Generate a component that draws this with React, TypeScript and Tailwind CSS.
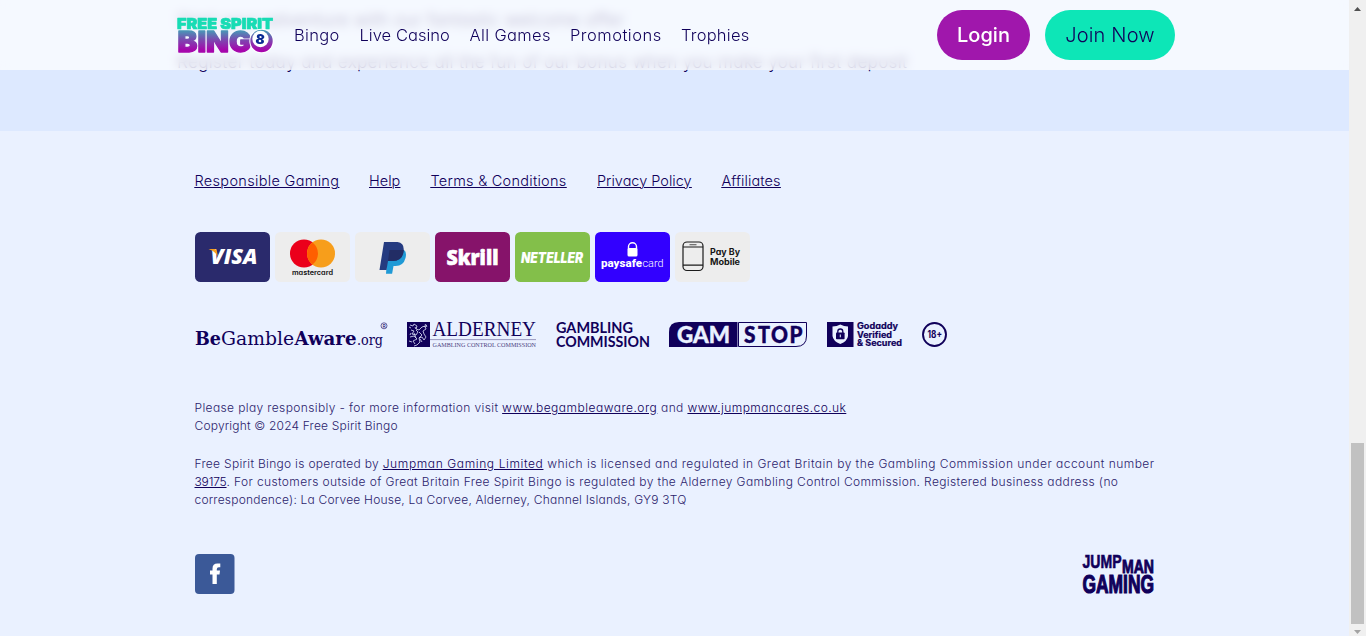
import type { ReactNode } from 'react';

const NAVY = '#10005a';

function BingoLogo() {
  return (
    <svg viewBox="0 0 98 38" className="h-[38px] w-[98px] overflow-visible" aria-label="Free Spirit Bingo">
      <defs>
        <linearGradient id="brand" gradientUnits="userSpaceOnUse" x1="0" y1="13" x2="0" y2="34">
          <stop offset="0" stopColor="#3fa5b8" />
          <stop offset="0.5" stopColor="#7a4bb0" />
          <stop offset="1" stopColor="#a606ac" />
        </linearGradient>
      </defs>
      <g fontFamily="Inter, sans-serif" fontWeight="900" strokeLinejoin="round">
        <text x="1" y="12.6" fontSize="15" fill="#18dcb4" stroke="#18dcb4" strokeWidth=".7" textLength="96" lengthAdjust="spacingAndGlyphs">FREE SPIRIT</text>
        <text x="1.5" y="35.5" fontSize="29" stroke="url(#brand)" strokeWidth="1.3" fill="url(#brand)" textLength="74" lengthAdjust="spacingAndGlyphs">BING</text>
        <circle cx="85.5" cy="25" r="12.2" fill="#fff" />
        <circle cx="85.5" cy="25" r="11.2" fill="url(#brand)" />
        <circle cx="84.5" cy="23" r="8.2" fill="#fff" />
        <text x="79.5" y="28" fontSize="13.5" fill="#0b2a93" transform="rotate(8 84 24)">8</text>
      </g>
    </svg>
  );
}

function Card({ color, label, children }: { color: string; label: string; children: ReactNode }) {
  return (
    <svg viewBox="0 0 75 50" className="h-[50px] w-[75px]" role="img" aria-label={label}>
      <rect width="75" height="50" rx="5.5" fill={color} />
      {children}
    </svg>
  );
}

function Payments() {
  return (
    <div className="mt-[40px] flex gap-[5px]">
      <Card color="#2a2a6c" label="Visa">
        <text x="15.5" y="32" fontFamily="Open Sans, sans-serif" fontWeight="800" fontStyle="italic" fontSize="20.5" fill="#fff" textLength="47" lengthAdjust="spacingAndGlyphs">VISA</text>
        <path d="M13.5 17h6q2 0 2.4 2l1 5.5Q20 19 13.5 17Z" fill="#f7a01d" />
      </Card>
      <Card color="#ededed" label="Mastercard">
        <circle cx="29" cy="21.5" r="14" fill="#eb001b" />
        <circle cx="46" cy="21.5" r="14" fill="#f79e1b" />
        <path d="M37.5 10.4a14 14 0 0 1 0 22.2a14 14 0 0 1 0-22.2Z" fill="#ff5f00" />
        <text x="17" y="42.5" fontFamily="Inter, sans-serif" fontWeight="600" fontSize="7" fill="#111" textLength="41" lengthAdjust="spacingAndGlyphs">mastercard</text>
      </Card>
      <Card color="#ededed" label="PayPal">
        <path d="M33 18h16q3 2 1.5 8-2 8-10 8h-2l-1.4 7.7H31Z" fill="#1f9ad6" />
        <path d="M29 10h13.5Q50 11 48.5 20 47 29 38 29h-5l-1.5 9H24.5Z" fill="#253b80" />
        <path d="M34.5 18H48.7Q48 29 38 29h-5Z" fill="#222d65" />
      </Card>
      <Card color="#86136a" label="Skrill">
        <text x="11.5" y="33.2" fontFamily="Open Sans, sans-serif" fontWeight="800" fontSize="20.5" fill="#fff" stroke="#fff" strokeWidth=".6" textLength="52" lengthAdjust="spacingAndGlyphs">Skrill</text>
      </Card>
      <Card color="#83bf4a" label="Neteller">
        <text x="6" y="30.5" fontFamily="Inter, sans-serif" fontWeight="900" fontStyle="italic" fontSize="14" fill="#fff" textLength="62" lengthAdjust="spacingAndGlyphs">NETELLER</text>
      </Card>
      <Card color="#3200ff" label="paysafecard">
        <path d="M33.5 17v-2.2a4 4 0 0 1 8 0V17" fill="none" stroke="#fff" strokeWidth="1.4" />
        <rect x="32.5" y="16" width="10" height="8.5" rx="1.5" fill="#fff" />
        <text x="6" y="35" fontFamily="Roboto, sans-serif" fontWeight="800" fontSize="11.5" fill="#fff" textLength="41" lengthAdjust="spacingAndGlyphs">paysafe</text>
        <text x="47.5" y="35" fontFamily="Roboto, sans-serif" fontWeight="300" fontSize="11.5" fill="#fff" textLength="21" lengthAdjust="spacingAndGlyphs">card</text>
      </Card>
      <Card color="#ededed" label="Pay By Mobile">
        <g fill="none" stroke="#1b1b1b" strokeWidth="1.2">
          <rect x="8" y="10" width="20" height="28.5" rx="4" />
          <path d="M8 15h20M8 33.2h20" />
          <path d="M14.5 12.7h7" stroke="#666" />
        </g>
        <g fontFamily="Inter, sans-serif" fontWeight="700" fontSize="8.4" fill="#151515">
          <text x="35" y="23" textLength="30" lengthAdjust="spacingAndGlyphs">Pay By</text>
          <text x="35" y="32.5" textLength="30" lengthAdjust="spacingAndGlyphs">Mobile</text>
        </g>
      </Card>
    </div>
  );
}

function Regulators() {
  return (
    <div className="mt-[39px] flex h-[28px] items-start">
      <svg viewBox="0 0 193 28" className="h-[28px] w-[193px] overflow-visible" fill={NAVY}>
        <g fontFamily="DejaVu Serif, serif" fontSize="19">
          <text x="0" y="23.7" fontWeight="700" textLength="26" lengthAdjust="spacingAndGlyphs">Be</text>
          <text x="26" y="23.7" textLength="73" lengthAdjust="spacingAndGlyphs">Gamble</text>
          <text x="99.5" y="23.7" fontWeight="700" textLength="62" lengthAdjust="spacingAndGlyphs">Aware</text>
          <text x="162" y="23.7" fontSize="15.5" textLength="26" lengthAdjust="spacingAndGlyphs">.org</text>
        </g>
        <circle cx="189" cy="4.8" r="3" fill="none" stroke={NAVY} strokeWidth=".6" />
        <text x="187.4" y="6.7" fontFamily="Inter, sans-serif" fontSize="5">R</text>
      </svg>
      <svg viewBox="0 0 130 26" className="ml-[19px] mt-px h-[26px] w-[130px] overflow-visible" fill={NAVY}>
        <rect width="23" height="25" />
        <path fill="none" stroke="#dfe5fa" strokeWidth=".8" d="M3 3l3 1 1-2 3 2-1 3 3 1 3-3 3-1 1 3-3 2 1 3 2 3-2 3-2-3-3 1 1 4-3 3-3 1M4 8l3 1-2 3 4 1 2-3-2-2M3 15l4-1 3 3-4 2 2 3M12 10l3 3-3 3M4 11l-1 2M17 5l3-2M2 5l2 1M2 19l3 1M18 2l2 3M8 5l1 2M7 11l2 5M13 17l2 3" />
        <g fontFamily="Liberation Serif, serif">
          <text x="25.5" y="14.2" fontSize="20.5" textLength="103.5" lengthAdjust="spacingAndGlyphs">ALDERNEY</text>
          <path d="M23 17.6h106" stroke="#7773a5" strokeWidth=".7" />
          <text x="25.5" y="25" fontSize="6.8" fill="#4a4280" textLength="103.5" lengthAdjust="spacingAndGlyphs">GAMBLING CONTROL COMMISSION</text>
        </g>
      </svg>
      <svg viewBox="0 0 95 28" className="ml-[19px] h-[28px] w-[95px] overflow-visible" fill={NAVY}>
        <g fontFamily="Lato, sans-serif" fontWeight="700" fontSize="15.3">
          <text x="0" y="12" textLength="77" lengthAdjust="spacingAndGlyphs">GAMBLING</text>
          <text x="0" y="25.7" textLength="94" lengthAdjust="spacingAndGlyphs">COMMISSION</text>
        </g>
      </svg>
      <svg viewBox="0 0 139 26" className="ml-[18px] mt-px h-[26px] w-[139px]" fill={NAVY}>
        <path d="M10 0H68.5V25H0V10Q0 0 10 0Z" />
        <path d="M69.5.5H137.5V14Q137.500 24.5 127 24.5H69.5Z" fill="none" stroke={NAVY} />
        <g fontFamily="Lato, sans-serif" fontWeight="900" fontSize="22.5" strokeWidth=".4">
          <text x="8" y="20.8" fill="#eaf1ff" stroke="#eaf1ff" textLength="53" lengthAdjust="spacingAndGlyphs">GAM</text>
          <g stroke={NAVY}>
            <text x="75" y="20.8" textLength="11.500" lengthAdjust="spacingAndGlyphs">S</text>
            <text x="89" y="20.8" textLength="12" lengthAdjust="spacingAndGlyphs">T</text>
            <text x="102" y="20.8" textLength="17" lengthAdjust="spacingAndGlyphs">O</text>
            <text x="120.500" y="20.8" textLength="13" lengthAdjust="spacingAndGlyphs">P</text>
          </g>
        </g>
      </svg>
      <svg viewBox="0 0 76 27" className="ml-[19px] mt-px h-[27px] w-[76px] overflow-visible" fill={NAVY}>
        <rect width="26.5" height="25" />
        <path d="M13.3 2.5Q17 4.500 21 4.500V14Q20.500 19 13.300 22 6 19 5.500 14V4.500Q10 4.500 13.300 2.500Z" fill="#eaf1ff" />
        <path d="M10.8 11V9.500a2.500 2.500 0 0 1 5 0V11" fill="none" stroke={NAVY} strokeWidth="1.300" />
        <rect x="9" y="10.5" width="8.6" height="6.8" rx=".8" />
        <path d="M13.3 12.5v2.8" stroke="#eaf1ff" />
        <g fontFamily="Inter, sans-serif" fontWeight="700" fontSize="8.5" stroke={NAVY} strokeWidth=".2">
          <text x="30" y="7" textLength="41" lengthAdjust="spacingAndGlyphs">Godaddy</text>
          <text x="30" y="15.6" textLength="35" lengthAdjust="spacingAndGlyphs">Verified</text>
          <text x="30" y="24.3" textLength="45" lengthAdjust="spacingAndGlyphs">&amp; Secured</text>
        </g>
      </svg>
      <svg viewBox="0 0 26 26" className="ml-[19px] mt-px h-[26px] w-[26px]" fill={NAVY}>
        <circle cx="12.5" cy="12.5" r="11.5" fill="none" stroke={NAVY} strokeWidth="1.9" />
        <text x="5.5" y="16" fontFamily="Inter, sans-serif" fontWeight="700" fontSize="10" textLength="14.5" lengthAdjust="spacingAndGlyphs">18+</text>
      </svg>
    </div>
  );
}

function Header() {
  return (
    <>
      <div className="absolute inset-x-0 top-0 h-[100px] backdrop-blur-[5px] [clip-path:inset(0_0_30px_0)]" />
      <header className="absolute inset-x-0 top-0 flex h-[70px] items-center bg-white/70 pl-[176px] pr-[174px] text-[16.5px] font-light leading-6 text-[#10005a]">
        <BingoLogo />
        <nav className="ml-5 flex gap-5 whitespace-nowrap">
          <a className="w-[45.5px] tracking-[0.02em]">Bingo</a>
          <a className="w-[90px] tracking-[0.002em]">Live Casino</a>
          <a className="w-[80.5px] tracking-[0.022em]">All Games</a>
          <a className="w-[91px] tracking-[0.03em]">Promotions</a>
          <a className="w-[68px] tracking-[0.014em]">Trophies</a>
        </nav>
        <div className="ml-auto flex gap-[15px] text-xl">
          <button className="h-[50px] w-[93px] rounded-[25px] bg-[#a017ac] font-medium text-white">Login</button>
          <button className="h-[50px] w-[130px] rounded-[25px] bg-[#0de6b7] font-light tracking-[0.008em]">Join Now</button>
        </div>
      </header>
    </>
  );
}

export default function App() {
  return (
    <div className="relative flex h-[636px] w-[1366px] overflow-hidden bg-[#eaf1ff] font-[Inter,sans-serif] text-[#10005a] [font-feature-settings:'cv11']">
      <div className="relative flex w-[1349px] flex-col">
        <section className="h-[131px] shrink-0 whitespace-nowrap bg-[#dde9ff] pl-[177px] pt-2 text-[17px] font-light leading-6">
          <p className="tracking-[0.028em]">Start your adventure with our fantastic welcome offer</p>
          <p className="mt-[17.5px] tracking-[0.021em]">Register today and experience all the fun of our bonus when you make your first deposit</p>
        </section>
        <Header />
        <footer className="pl-[194.5px] pr-[194px] pt-[39px]">
          <nav className="flex gap-[30px] whitespace-nowrap text-[14.5px] font-light leading-[22px] underline decoration-1 underline-offset-1">
            <a className="w-[144.5px] tracking-[0.022em]">Responsible Gaming</a>
            <a className="w-[31.5px]">Help</a>
            <a className="w-[136.5px] tracking-[0.018em]">Terms &amp; Conditions</a>
            <a className="w-[94.5px]">Privacy Policy</a>
            <a className="tracking-[0.006em]">Affiliates</a>
          </nav>
          <Payments />
          <Regulators />
          <div className="mt-[50px] whitespace-nowrap text-xs font-light leading-[18px] text-[#2a1c6c] [&_a]:text-[#10005a] [&_a]:underline [&_a]:underline-offset-1">
            <p className="tracking-[0.031em]">
              Please play responsibly - for more information visit <a className="tracking-[0.041em]">www.begambleaware.org</a> and <a className="tracking-[0.036em]">www.jumpmancares.co.uk</a>
            </p>
            <p className="tracking-[0.015em]">Copyright © 2024 Free Spirit Bingo</p>
            <p className="mt-5 tracking-[0.039em]">
              <span className="tracking-[0.025em]">Free Spirit Bingo is operated by </span>
              <a className="tracking-[0.051em]">Jumpman Gaming Limited</a> which is licensed and regulated in Great Britain by the Gambling Commission under account number
            </p>
            <p className="tracking-[0.031em]">
              <a className="tracking-[-0.015em]">39175</a>. For customers outside of Great Britain Free Spirit Bingo is regulated by the Alderney Gambling Control Commission. Registered business address (no
            </p>
            <p className="tracking-[0.017em]">correspondence): La Corvee House, La Corvee, Alderney, Channel Islands, GY9 3TQ</p>
          </div>
          <div className="mt-[45px] flex justify-between">
            <svg viewBox="0 0 40 40" className="h-10 w-10" role="img" aria-label="Facebook">
              <rect width="39.5" height="40" rx="4" fill="#3b5998" />
              <path d="M17.5 30V20.5h-2.500V16.500h2.500V14.500q0-5 5-5h2.800v3.800h-1.500q-2 0-2 2v1.200h3.200l-.5 4h-2.700V30Z" fill="#fff" />
            </svg>
            <svg viewBox="0 0 73 41" className="h-[41px] w-[73px] overflow-visible" fill={NAVY} stroke={NAVY} fontFamily="Liberation Sans Narrow, Liberation Sans, sans-serif" fontWeight="700">
              <text x="0.5" y="13.5" fontSize="18" strokeWidth=".6" textLength="39" lengthAdjust="spacingAndGlyphs">JUMP</text>
              <text x="40" y="18.5" fontSize="18.5" strokeWidth=".9" textLength="32" lengthAdjust="spacingAndGlyphs">MAN</text>
              <text x="0.5" y="39.3" fontSize="25" strokeWidth="1.2" textLength="71.5" lengthAdjust="spacingAndGlyphs">GAMING</text>
            </svg>
          </div>
        </footer>
      </div>
      <div className="flex w-[17px] flex-col items-center bg-[#f0f0f0]">
        <svg viewBox="0 0 17 17" className="h-[17px] w-[17px] shrink-0" fill="#505050"><path d="M5 11h7L8.5 7Z" /></svg>
        <div className="mt-[426px] h-[181px] w-[13px] shrink-0 bg-[#c1c1c1]" />
        <svg viewBox="0 0 17 12" className="h-3 w-[17px]" fill="#a3a3a3"><path d="M5 6h7L8.5 10Z" /></svg>
      </div>
    </div>
  );
}
